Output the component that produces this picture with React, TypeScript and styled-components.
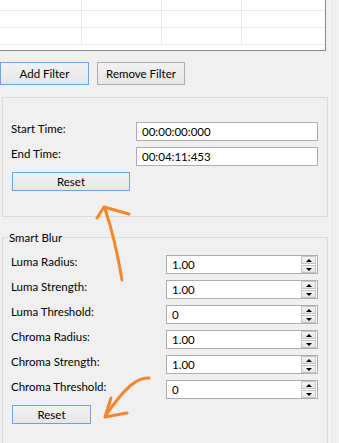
import React from 'react';
import styled, { createGlobalStyle } from 'styled-components';

const Global = createGlobalStyle`
  html, body { margin: 0; padding: 0; background: #f0f0f0; }
  body {
    font-family: Lato, "Liberation Sans", sans-serif;
    font-size: 11.5px;
    color: #000;
    overflow: hidden;
  }
`;

const Page = styled.div`
  position: relative;
  display: flex;
  width: 339px;
  height: 443px;
  overflow: hidden;
  background: #f0f0f0;
`;

const Main = styled.div`
  width: 329px;
  flex-shrink: 0;
  display: flex;
  flex-direction: column;
`;

const Splitter = styled.div`
  width: 1px;
  flex-shrink: 0;
  background: #fbfbfb;
`;

const Side = styled.div`
  flex: 1;
  background: #f0f0f0;
`;

const TableFrame = styled.div`
  width: 326px;
  height: 51px;
  flex-shrink: 0;
  box-sizing: border-box;
  background: #fff;
  border-right: 1px solid #828790;
  border-bottom: 1px solid #828790;
  padding-bottom: 5px;
  display: flex;
  flex-direction: column;
  justify-content: flex-end;
  overflow: hidden;
`;

const TableRow = styled.div`
  flex-shrink: 0;
  height: 17px;
  box-sizing: border-box;
  border-bottom: 1px solid #e9e9e9;
  display: grid;
  grid-template-columns: 82px 80px 80px 1fr;
`;

const Cell = styled.div<{ $last?: boolean }>`
  border-right: ${(p) => (p.$last ? 'none' : '1px solid #e9e9e9')};
`;

const ButtonBar = styled.div`
  display: flex;
  gap: 8px;
  margin-top: 11px;
`;

const Button = styled.button<{ $w: number; $h: number; $focus?: boolean }>`
  width: ${(p) => p.$w}px;
  height: ${(p) => p.$h}px;
  box-sizing: border-box;
  margin: 0;
  padding: 0;
  font-family: inherit;
  font-size: 11.5px;
  color: #000;
  border: 1px solid ${(p) => (p.$focus ? '#6aa6dc' : '#adadad')};
  background: linear-gradient(#f2f2f2, #e6e6e6);
  display: flex;
  align-items: center;
  justify-content: center;
`;

const GroupBox = styled.div`
  margin: 12px 0 0 2px;
  width: 326px;
  height: 120px;
  box-sizing: border-box;
  border: 1px solid #dcdcdc;
  padding: 24px 9px 0 8px;
  display: flex;
  flex-direction: column;
  flex-shrink: 0;
`;

const FormGrid = styled.div<{ $field: number }>`
  display: grid;
  grid-template-columns: 1fr ${(p) => p.$field}px;
  grid-auto-rows: 19px;
  row-gap: 6px;
  align-items: center;
`;

const Label = styled.div`
  margin-bottom: 6px;
  line-height: 12px;
  white-space: nowrap;
`;

const TextField = styled.div`
  height: 19px;
  box-sizing: border-box;
  border: 1px solid #abadb3;
  background: #fff;
  padding-left: 5px;
  line-height: 17px;
`;

const ResetRow = styled.div`
  margin: 6px 0 0 1px;
`;

const SmartBlur = styled.fieldset`
  margin: 13px 0 0 2px;
  width: 326px;
  box-sizing: border-box;
  border: 1px solid #dcdcdc;
  padding: 10px 9px 40px 8px;
  min-inline-size: 0;
`;

const Legend = styled.legend`
  margin-left: -3px;
  padding: 0 1px;
  line-height: 15px;
`;

const SpinBox = styled.div`
  height: 19px;
  box-sizing: border-box;
  border: 1px solid #abadb3;
  background: #fff;
  display: flex;
`;

const SpinText = styled.div`
  flex: 1;
  padding-left: 5px;
  line-height: 17px;
`;

const SpinButtons = styled.div`
  width: 15px;
  padding-right: 1px;
  display: flex;
  flex-direction: column;
  gap: 1px;
`;

const SpinButton = styled.div`
  flex: 1;
  box-sizing: border-box;
  border: 1px solid #c4c4c4;
  background: linear-gradient(#f4f4f4, #e4e4e4);
  display: flex;
  align-items: center;
  justify-content: center;
`;

const Arrow = styled.div<{ $down?: boolean }>`
  width: 0;
  height: 0;
  border-left: 3px solid transparent;
  border-right: 3px solid transparent;
  ${(p) => (p.$down ? 'border-top: 3px solid #000;' : 'border-bottom: 3px solid #000;')}
`;

const Annotations = styled.svg`
  position: absolute;
  left: 0;
  top: 0;
  width: 339px;
  height: 443px;
  pointer-events: none;
`;

const Spin = ({ value }: { value: string }) => (
  <SpinBox>
    <SpinText>{value}</SpinText>
    <SpinButtons>
      <SpinButton>
        <Arrow />
      </SpinButton>
      <SpinButton>
        <Arrow $down />
      </SpinButton>
    </SpinButtons>
  </SpinBox>
);

const blurRows: [string, string][] = [
  ['Luma Radius:', '1.00'],
  ['Luma Strength:', '1.00'],
  ['Luma Threshold:', '0'],
  ['Chroma Radius:', '1.00'],
  ['Chroma Strength:', '1.00'],
  ['Chroma Threshold:', '0'],
];

export default function App() {
  return (
    <>
      <Global />
      <Page>
        <Main>
          <TableFrame>
            {[0, 1, 2].map((r) => (
              <TableRow key={r}>
                <Cell />
                <Cell />
                <Cell />
                <Cell $last />
              </TableRow>
            ))}
          </TableFrame>
          <ButtonBar>
            <Button $w={89} $h={23} $focus>
              Add Filter
            </Button>
            <Button $w={88} $h={23}>
              Remove Filter
            </Button>
          </ButtonBar>
          <GroupBox>
            <FormGrid $field={182}>
              <Label>Start Time:</Label>
              <TextField>00:00:00:000</TextField>
              <Label>End Time:</Label>
              <TextField>00:04:11:453</TextField>
            </FormGrid>
            <ResetRow>
              <Button $w={118} $h={19} $focus>
                Reset
              </Button>
            </ResetRow>
          </GroupBox>
          <SmartBlur>
            <Legend>Smart Blur</Legend>
            <FormGrid $field={152}>
              {blurRows.map(([label, value]) => (
                <React.Fragment key={label}>
                  <Label>{label}</Label>
                  <Spin value={value} />
                </React.Fragment>
              ))}
            </FormGrid>
            <ResetRow>
              <Button $w={79} $h={19} $focus>
                Reset
              </Button>
            </ResetRow>
          </SmartBlur>
        </Main>
        <Splitter />
        <Side />
        <Annotations viewBox="0 0 339 443">
          <g fill="none" stroke="#f5862b" strokeWidth={3} strokeLinecap="round" strokeLinejoin="round">
            <path d="M122 280 C119 262, 115 238, 105 209" />
            <path d="M97 218 L104 207 L129 214" />
            <path d="M149 378 C138 377, 126 386, 106 415" />
            <path d="M111 398 L105 417 L127 413" />
          </g>
        </Annotations>
      </Page>
    </>
  );
}
